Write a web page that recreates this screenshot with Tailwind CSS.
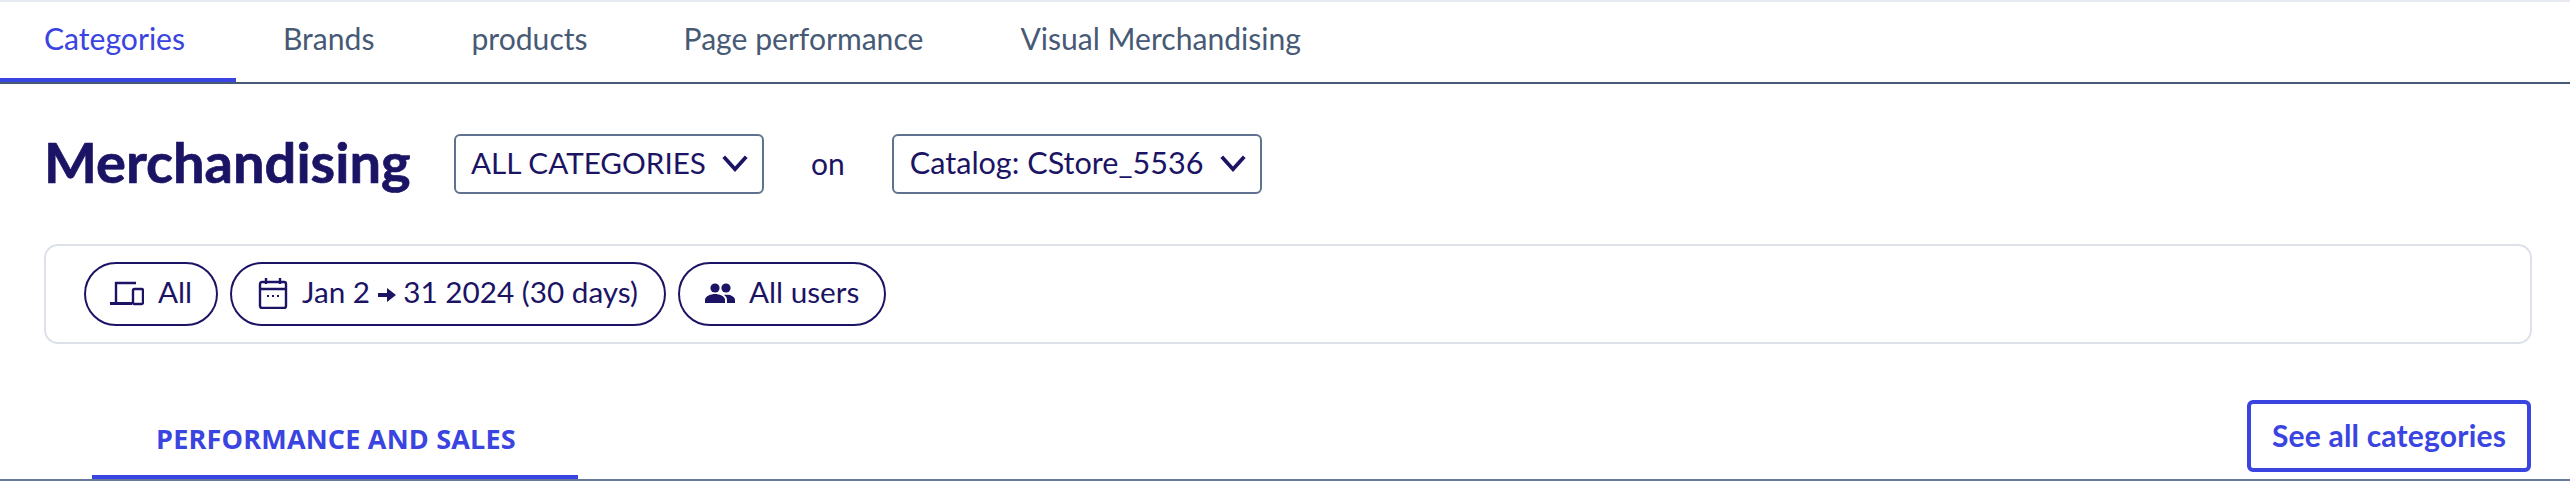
<!DOCTYPE html>
<html lang="en">
<head>
    <meta charset="UTF-8">
    <title>Merchandising</title>
    <script src="https://cdn.jsdelivr.net/npm/@tailwindcss/browser@4"></script>
</head>
<body class="bg-white h-[488px] overflow-hidden font-['Lato','Liberation_Sans',sans-serif] text-[#1b1464]">
    <!-- top tabs -->
    <nav class="flex h-[84px] border-t-2 border-t-[#e6e9ef] border-b-2 border-b-[#475a75] text-[30.1px] text-[#475a75]">
        <a class="w-[236px] pl-[44px] pt-[14px] border-b-4 border-[#3a44e0] text-[#3a44e0]">Categories</a>
        <a class="ml-[47px] pt-[14px]">Brands</a>
        <a class="ml-[97px] pt-[14px]">products</a>
        <a class="ml-[96px] pt-[14px]">Page performance</a>
        <a class="ml-[97px] pt-[14px]">Visual Merchandising</a>
    </nav>

    <!-- title row -->
    <div class="flex items-center h-[60px] mt-[50px] pl-[44px]">
        <h1 class="w-[410px] pb-[4px] text-[56px] font-bold leading-none [-webkit-text-stroke:0.7px_#1b1464]">Merchandising</h1>
        <button class="flex items-center justify-between w-[310px] h-[60px] pb-[2px] pl-[15px] pr-[12px] border-2 border-[#5f7290] rounded-[6px] text-[29.7px]">
            ALL CATEGORIES
            <svg class="w-[30px] h-[30px]" viewBox="0 0 24 24" fill="none" stroke="#1b1464" stroke-width="3"><path d="M3 7l9 10 9-10"/></svg>
        </button>
        <span class="ml-[47px] pb-[2px] text-[30px]">on</span>
        <button class="flex items-center justify-between ml-[47px] w-[370px] h-[60px] pb-[2px] pl-[16px] pr-[12px] border-2 border-[#5f7290] rounded-[6px] text-[30.6px]">
            Catalog: CStore_5536
            <svg class="w-[30px] h-[30px]" viewBox="0 0 24 24" fill="none" stroke="#1b1464" stroke-width="3"><path d="M3 7l9 10 9-10"/></svg>
        </button>
    </div>

    <!-- filters card -->
    <div class="flex items-center gap-[12px] mt-[50px] ml-[44px] mr-[38px] h-[100px] pl-[38px] border-2 border-[#dde1ea] rounded-[14px] text-[29.7px]">
        <button class="flex items-center gap-[14px] h-[64px] w-[134px] pb-[3px] pl-[24px] border-2 border-[#1b1464] rounded-full">
            <svg class="w-[34px] h-[26px]" viewBox="0 0 34 26" fill="none" stroke="#1b1464" stroke-width="2.4"><path d="M26 3H6v20"/><path d="M0 23.5h22" stroke-width="3"/><rect x="23" y="9" width="10" height="15" rx="1.5"/></svg>
            All
        </button>
        <button class="flex items-center gap-[14px] h-[64px] w-[436px] pb-[3px] pl-[26px] border-2 border-[#1b1464] rounded-full">
            <svg class="w-[30px] h-[32px]" viewBox="0 0 30 32" fill="none" stroke="#1b1464" stroke-width="2.4"><rect x="2" y="5" width="26" height="26" rx="2"/><path d="M2 12h26M8 1v6M22 1v6"/><path d="M9 19h2M14 19h2M19 19h2" stroke-width="2"/></svg>
            <span>Jan 2 <svg class="inline w-[18px] h-[14px] align-[1px]" viewBox="0 0 18 14" fill="#1b1464"><path d="M0 5h9V0l9 7-9 7V9H0z"/></svg> 31 2024 (30 days)</span>
        </button>
        <button class="flex items-center gap-[14px] h-[64px] w-[208px] pb-[3px] pl-[25px] border-2 border-[#1b1464] rounded-full">
            <svg class="w-[30px] h-[20px]" viewBox="0 0 30 20" fill="#1b1464"><circle cx="10" cy="5" r="4.6"/><circle cx="21" cy="5" r="4.6"/><path d="M0 20v-3c0-4 6-6 10-6s10 2 10 6v3z"/><path d="M22 20v-3c0-2-1-4-3-5 5-1 11 1 11 5v3z"/></svg>
            All users
        </button>
    </div>

    <!-- section tabs -->
    <div class="flex items-end justify-between h-[82px] mt-[55px] pl-[92px] pr-[39px] border-b-[2px] border-[#66799a]">
        <a class="w-[486px] pl-[64px] pb-[16px] border-b-4 border-[#3a44e0] text-[27px] tracking-[0.2px] font-bold text-[#3a44e0] font-['Open_Sans','Lato',sans-serif]">PERFORMANCE AND SALES</a>
        <button class="mb-[7px] w-[284px] h-[72px] pb-[2px] border-4 border-[#3a44e0] rounded-[6px] text-[30px] tracking-[0.2px] font-bold text-[#3a44e0]">See all categories</button>
    </div>
</body>
</html>
